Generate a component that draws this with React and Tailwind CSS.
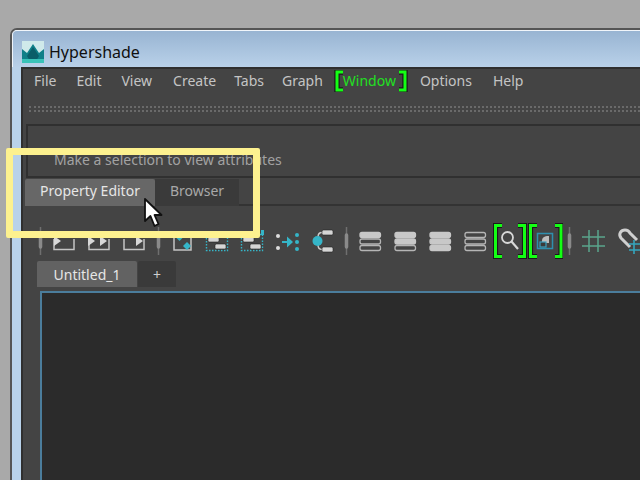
const teal = "#35b5c8";

function Bracket({ right, h = 22, w = 11 }) {
  const d = right ? `M2 2 H${w - 3} V${h - 2} H2` : `M${w - 2} 2 H3 V${h - 2} H${w - 2}`;
  return (
    <svg width={w} height={h} className="shrink-0 block">
      <path d={d} fill="none" stroke="#1a1a1a" strokeWidth="5.4" />
      <path d={d} fill="none" stroke="#14ff14" strokeWidth="3" />
    </svg>
  );
}

function Sep() {
  return (
    <div className="w-[13px] h-[40px] flex justify-center items-center">
      <svg width="5" height="28"><path d="M2.5 0V28" stroke="#6f6f6f" strokeWidth="1.5" /><path d="M2.5 8V20" stroke="#8a8a8a" strokeWidth="3.5" strokeLinecap="round" /></svg>
    </div>
  );
}

function Cell({ children }) {
  return <svg width="35" height="40" viewBox="0 0 35 40" className="shrink-0 block">{children}</svg>;
}

function Tri({ x, y, s = 7 }) {
  return <path d={`M${x} ${y - s * 0.7}L${x + s} ${y}L${x} ${y + s * 0.7}Z`} fill="#d8d8d8" />;
}

function Pill({ x, y, w = 11 }) {
  return <rect x={x} y={y} width={w} height="5" rx="1.5" fill="#d5d5d5" stroke="#222" strokeWidth="0.6" />;
}

function Rows({ fills }) {
  return (
    <Cell>
      {fills.map((f, i) => (
        <rect key={i} x="7" y={11.5 + i * 6.5} width="20.5" height="5" rx="2" fill={f ? "#c8c8c8" : "none"} stroke={f ? "#c8c8c8" : "#b5b5b5"} strokeWidth="1.3" />
      ))}
    </Cell>
  );
}

function DashBox({ dotX, dotY }) {
  return (
    <Cell>
      <rect x="6.5" y="13.5" width="21" height="16" fill="none" stroke={teal} strokeWidth="1.4" strokeDasharray="1.5 1.5" />
      <Pill x={8} y={16} />
      <Pill x={15} y={23} />
      <rect x={dotX} y={dotY} width="3" height="5" fill={teal} />
    </Cell>
  );
}

function Wedge({ left, right }) {
  return (
    <Cell>
      <path d="M7 18V28.5H27V18" fill="none" stroke="#c4c4c4" strokeWidth="1.5" />
      {left != null && <Tri x={left} y={20} />}
      {right != null && <Tri x={right} y={20} />}
    </Cell>
  );
}

function GreenBrackets({ l1, l2, r1, r2 }) {
  const left = `M${l2} 4.5H${l1}V35.5H${l2}`;
  const right = `M${r1} 4.5H${r2}V35.5H${r1}`;
  return (
    <>
      <path d={left} fill="none" stroke="#1a1a1a" strokeWidth="5.2" />
      <path d={right} fill="none" stroke="#1a1a1a" strokeWidth="5.2" />
      <path d={left} fill="none" stroke="#14ff14" strokeWidth="3" />
      <path d={right} fill="none" stroke="#14ff14" strokeWidth="3" />
    </>
  );
}

function Toolbar() {
  return (
    <div className="flex items-center h-[40px] ml-[11px] mt-[15px] w-[640px]">
      <Sep />
      <Wedge left={7} />
      <Wedge left={6} right={18} />
      <Wedge right={19} />
      <Sep />
      <Cell>
        <path d="M9 13H26V29H9Z" fill="none" stroke="#c4c4c4" strokeWidth="1.5" />
        <path d="M14.5 12l4 4-4 4-4-4Z" fill={teal} />
        <path d="M22 21l4 4-4 4-4-4Z" fill={teal} />
      </Cell>
      <DashBox dotX={18} dotY={10} />
      <DashBox dotX={26} dotY={9} />
      <Cell>
        <circle cx="8" cy="15" r="2" fill="#ddd" /><circle cx="8" cy="27" r="2" fill="#ddd" />
        <circle cx="27" cy="14" r="2" fill={teal} /><circle cx="27" cy="21" r="2" fill={teal} /><circle cx="27" cy="28" r="2" fill={teal} />
        <path d="M12 21H18" stroke={teal} strokeWidth="2" />
        <path d="M17 15.5L23 21L17 26.5Z" fill={teal} />
      </Cell>
      <Cell>
        <path d="M17 11.5C14 11.5 13 14 13 16M17 28.5C14 28.5 13 26 13 24" fill="none" stroke="#ccc" strokeWidth="1.4" />
        <circle cx="12.5" cy="20" r="5" fill={teal} />
        <Pill x={17} y={9} />
        <Pill x={17} y={26} />
      </Cell>
      <Sep />
      <Rows fills={[true, false, false]} />
      <Rows fills={[true, true, false]} />
      <Rows fills={[true, true, true]} />
      <Rows fills={[false, false, false]} />
      <Cell>
        <GreenBrackets l1={2.5} l2={9} r1={25} r2={31.5} />
        <circle cx="14.5" cy="16.5" r="5.5" fill="none" stroke="#d8d8d8" strokeWidth="1.8" />
        <path d="M18.5 20.5L25 28" stroke="#d8d8d8" strokeWidth="2.2" />
      </Cell>
      <Cell>
        <GreenBrackets l1={2.5} l2={9} r1={27} r2={33} />
        <rect x="9.5" y="12.5" width="15" height="15" fill="none" stroke="#2f8fae" strokeWidth="1.5" />
        <path d="M14 20C14 16.5 16 15 21 15V22H14Z" fill="#bdbdbd" />
        <rect x="12" y="21" width="6" height="5" fill="#3a3a3a" stroke="#3aa0c0" strokeWidth="1.2" />
      </Cell>
      <Sep />
      <Cell>
        <path d="M13 9V31M22 9V31M6 16H29M6 25H29" stroke="#5aa58c" strokeWidth="1.5" fill="none" />
      </Cell>
      <Cell>
        <path d="M19 26L10 17C7 13 10 9 14 9C16 9 18 10 19 12L26 19" fill="none" stroke="#cfcfcf" strokeWidth="3" />
        <path d="M23 19V33M30 19V33M18 23H35M18 29H35" stroke="#35a5bd" strokeWidth="1.6" fill="none" />
      </Cell>
    </div>
  );
}

export default function App() {
  return (
    <div className="relative w-[640px] h-[480px] overflow-hidden bg-[#a9a9a9] pt-[28px] pl-[10px] font-['Noto_Sans',sans-serif]">
      <div className="h-[460px] rounded-tl-[7px] border-t-2 border-l-2 border-[#555] bg-[#b9d2ea]">
        <div className="h-[37px] border-t border-l border-white/80 rounded-tl-[5px] flex items-center pl-[9px] pt-[5px] gap-[5px] bg-[linear-gradient(180deg,#98b4d2,#b9d1e9)]">
          <svg width="22" height="22" viewBox="0 0 22 22" className="shrink-0">
            <rect width="22" height="22" fill="#cfe9ea" />
            <path d="M0 22V8L5 12 11 3 17 12 22 8V22Z" fill="#0f7f88" />
            <path d="M5 15L11 6 17 15 14 20H8Z" fill="#0a5d68" />
            <rect y="18" width="22" height="4" fill="#39c2b8" />
          </svg>
          <span className="text-[16px] leading-none text-[#101010]">Hypershade</span>
        </div>
        <div className="ml-[9px] h-[420px] bg-[#444444] border-t-2 border-l-2 border-[#2f2f2f] overflow-hidden">
          <div className="flex items-center h-[23px] pl-[11px] gap-[19px] text-[14px] text-[#c4c4c4] whitespace-nowrap">
            <span>File</span>
            <span className="ml-[1px]">Edit</span>
            <span className="ml-[1px]">View</span>
            <span className="ml-[2px]">Create</span>
            <span className="-ml-[1px]">Tabs</span>
            <span className="-ml-[1px]">Graph</span>
            <span className="flex items-center -ml-[8px] text-[#22e022]">
              <Bracket />
              <span className="-ml-[2px] mr-[1px]">Window</span>
              <Bracket right />
            </span>
            <span className="-ml-[7px]">Options</span>
            <span className="ml-[2px]">Help</span>
          </div>
          <div className="mt-[14px] ml-[6px] flex flex-col gap-[2px]">
            <div className="border-t-2 border-dotted border-[#6a6a6a]" />
            <div className="border-t-2 border-dotted border-[#6a6a6a]" />
          </div>
          <div className="mt-[12px] ml-[3px] h-[54px] border-t-2 border-l-2 border-b-2 border-[#303030] pl-[26px] pt-[24px] text-[14px] leading-[20px] text-[#a2a2a2]">
            Make a selection to view attributes
          </div>
          <div className="flex h-[27px] mt-[1px] ml-[2px] text-[14px] items-stretch">
            <div className="w-[130px] pb-[4px] bg-[#676767] rounded-t-[2px] text-[#e6e6e6] flex items-center justify-center">Property Editor</div>
            <div className="w-[84px] pb-[4px] bg-[#3a3a3a] text-[#a8a8a8] flex items-center justify-center">Browser</div>
            <div className="flex-1 border-b-2 border-[#333]" />
          </div>
          <Toolbar />
          <div className="flex ml-[14px] mt-[0px] h-[26px] text-[14px]">
            <div className="w-[100px] bg-[#626262] rounded-t-[2px] text-[#e6e6e6] flex items-center justify-center">Untitled_1</div>
            <div className="w-[38px] ml-[1px] bg-[#3a3a3a] rounded-t-[2px] text-[#cfcfcf] flex items-center justify-center">+</div>
          </div>
          <div className="ml-[17px] mt-[4px] h-[300px] bg-[#2b2b2b] border-t-2 border-l-2 border-[#4b7d9c]" />
        </div>
      </div>

      <div className="absolute left-[6px] top-[148px] w-[254px] h-[90px] border-[7px] border-[#fdf18f] rounded-[2px]" />
      <svg className="absolute left-[143px] top-[197px]" width="20" height="32" viewBox="0 0 20 32">
        <path d="M2 2V24L7.5 19 11.5 29 15.5 27 11.5 18H18.5Z" fill="#fff" stroke="#111" strokeWidth="1.8" strokeLinejoin="round" />
      </svg>
    </div>
  );
}
